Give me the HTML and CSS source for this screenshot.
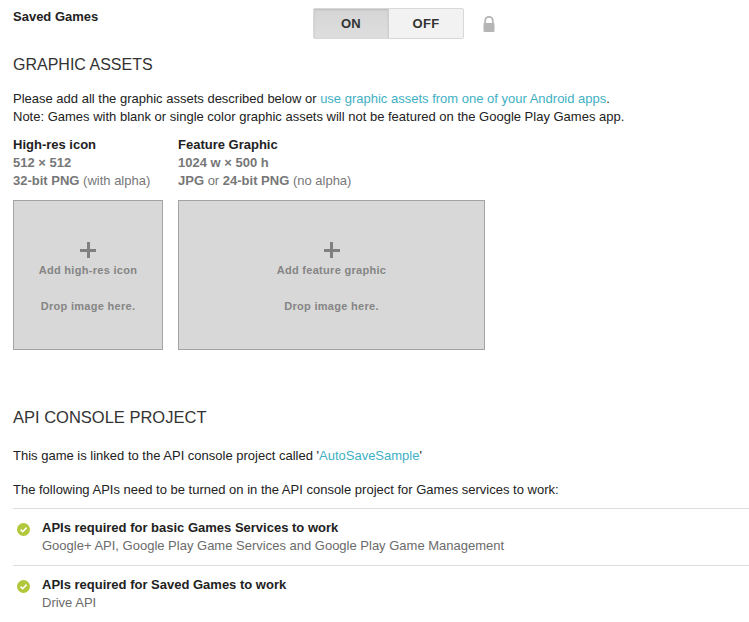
FILE: index.html
```html
<!DOCTYPE html>
<html lang="en">
<head>
    <meta charset="UTF-8">
    <meta name="viewport" content="width=device-width, initial-scale=1">
    <title>Game details</title>
    <link rel="stylesheet" href="styles.css">
</head>
<body>
    <div class="setting-row">
        <div class="setting-label">Saved Games</div>
        <div class="toggle">
            <div class="toggle-on">ON</div>
            <div class="toggle-off">OFF</div>
        </div>
        <svg class="lock" width="12" height="16" viewBox="0 0 12 16">
            <path d="M2.2 7V4.6a3.8 3.8 0 0 1 7.6 0V7" fill="none" stroke="#b5b5b5" stroke-width="1.8"/>
            <rect x="0.5" y="7" width="11" height="9" rx="1" fill="#b5b5b5"/>
        </svg>
    </div>

    <h2 class="assets-title">GRAPHIC ASSETS</h2>
    <p class="intro">Please add all the graphic assets described below or <a href="#">use graphic assets from one of your Android apps</a>.<br>Note: Games with blank or single color graphic assets will not be featured on the Google Play Games app.</p>

    <div class="assets">
        <div class="asset">
            <div class="asset-name">High-res icon</div>
            <div class="asset-spec"><b>512 × 512</b></div>
            <div class="asset-spec"><b>32-bit PNG</b> (with alpha)</div>
            <div class="dropzone icon-zone">
                <div class="plus"></div>
                <div class="drop-text">Add high-res icon</div>
                <div class="drop-text drop-hint">Drop image here.</div>
            </div>
        </div>
        <div class="asset">
            <div class="asset-name">Feature Graphic</div>
            <div class="asset-spec"><b>1024 w × 500 h</b></div>
            <div class="asset-spec"><b>JPG</b> or <b>24-bit PNG</b> (no alpha)</div>
            <div class="dropzone feature-zone">
                <div class="plus"></div>
                <div class="drop-text">Add feature graphic</div>
                <div class="drop-text drop-hint">Drop image here.</div>
            </div>
        </div>
    </div>

    <h2 class="api-title">API CONSOLE PROJECT</h2>
    <p class="linked">This game is linked to the API console project called '<a href="#">AutoSaveSample</a>'</p>
    <p class="needed">The following APIs need to be turned on in the API console project for Games services to work:</p>

    <div class="api-row">
        <svg class="check" width="13" height="13" viewBox="0 0 14 14">
            <circle cx="7" cy="7" r="7" fill="#b2c73a"/>
            <path d="M3.8 7.2l2.3 2.2 4.2-4.4" fill="none" stroke="#fff" stroke-width="1.7"/>
        </svg>
        <div>
            <div class="api-name">APIs required for basic Games Services to work</div>
            <div class="api-list">Google+ API, Google Play Game Services and Google Play Game Management</div>
        </div>
    </div>
    <div class="api-row">
        <svg class="check" width="13" height="13" viewBox="0 0 14 14">
            <circle cx="7" cy="7" r="7" fill="#b2c73a"/>
            <path d="M3.8 7.2l2.3 2.2 4.2-4.4" fill="none" stroke="#fff" stroke-width="1.7"/>
        </svg>
        <div>
            <div class="api-name">APIs required for Saved Games to work</div>
            <div class="api-list">Drive API</div>
        </div>
    </div>
</body>
</html>
```

FILE: styles.css
```css
body {
    font-family: 'Liberation Sans', Arial, sans-serif;
    font-size: 13px;
    line-height: 18px;
    margin: 0;
    padding: 0 0 0 13px;
    background: white;
    color: #222;
    overflow: hidden;
}
a {
    color: #3fb0c4;
    text-decoration: none;
}
p {
    margin: 0;
}
h2 {
    margin: 0;
    font-size: 16px;
    font-weight: normal;
    color: #333;
}
.setting-row {
    display: flex;
    align-items: flex-start;
    padding-top: 8px;
}
.setting-label {
    width: 300px;
    font-weight: bold;
}
.toggle {
    display: flex;
    width: 151px;
    height: 31px;
    box-sizing: border-box;
    border: 1px solid #d8d8d8;
    border-radius: 2px;
    font-weight: bold;
    font-size: 13px;
    line-height: 29px;
    text-align: center;
    color: #333;
    letter-spacing: 0.3px;
}
.toggle-on {
    width: 74px;
    background: linear-gradient(to bottom, #d5d5d5, #dedede);
    border-right: 1px solid #cfcfcf;
    box-shadow: inset 0 1px 2px rgba(0, 0, 0, 0.12);
}
.toggle-off {
    flex: 1;
    background: #f2f2f2;
}
.lock {
    margin: 8px 0 0 19px;
}
.assets-title {
    margin-top: 16px;
    line-height: 20px;
}
.intro {
    margin-top: 15px;
}
.assets {
    display: flex;
    gap: 15px;
    margin-top: 10px;
}
.asset-name {
    font-weight: bold;
}
.asset-spec {
    color: #777;
}
.dropzone {
    box-sizing: border-box;
    height: 150px;
    margin-top: 10px;
    padding-top: 41px;
    background: #d8d8d8;
    border: 1px solid #a3a3a3;
    text-align: center;
    color: #858585;
}
.icon-zone {
    width: 150px;
}
.feature-zone {
    width: 307px;
}
.plus {
    position: relative;
    width: 16px;
    height: 16px;
    margin: 0 auto 3px;
}
.plus::before, .plus::after {
    content: "";
    position: absolute;
    background: #808080;
}
.plus::before {
    left: 0;
    top: 6.5px;
    width: 16px;
    height: 3px;
}
.plus::after {
    left: 6.5px;
    top: 0;
    width: 3px;
    height: 16px;
}
.drop-text {
    font-size: 11px;
    font-weight: bold;
    letter-spacing: 0.3px;
}
.drop-hint {
    margin-top: 18px;
}
.api-title {
    margin-top: 56px;
    font-size: 16.5px;
    line-height: 22px;
}
.linked {
    margin-top: 19px;
}
.needed {
    margin-top: 16px;
}
.api-row {
    display: flex;
    align-items: flex-start;
    gap: 12px;
    height: 57px;
    margin-top: 9px;
    padding: 10px 0 0 4px;
    box-sizing: border-box;
    border-top: 1px solid #ddd;
}
.api-row + .api-row {
    margin-top: 0;
}
.check {
    margin-top: 4px;
}
.api-name {
    font-weight: bold;
}
.api-list {
    color: #6b6b6b;
}
```
